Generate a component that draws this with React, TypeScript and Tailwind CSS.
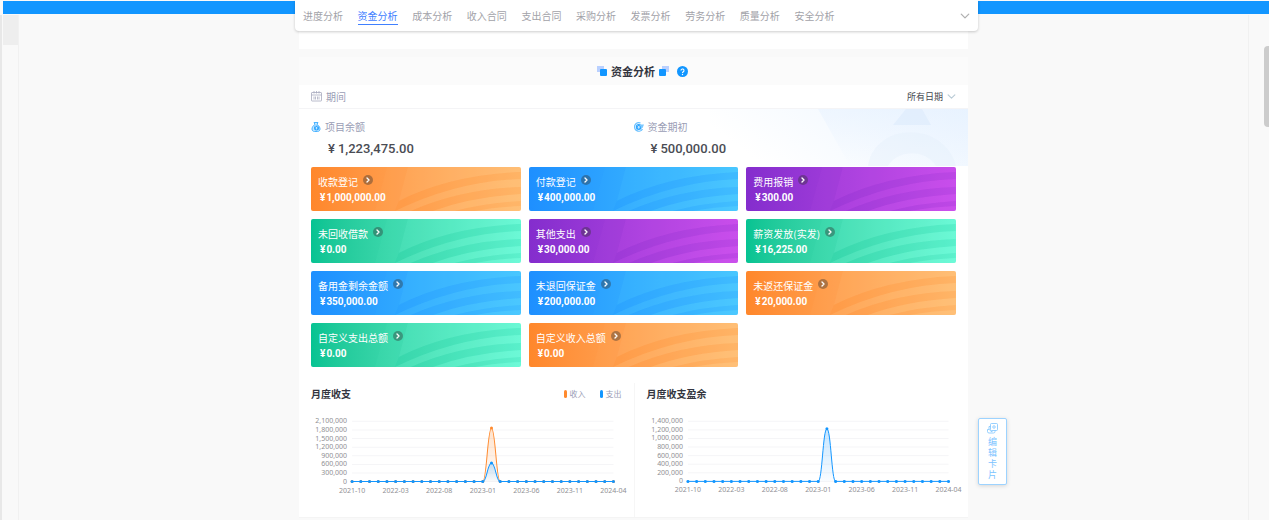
import { ChevronDown, ChevronRight } from 'lucide-react';

const tabs = [
  '进度分析',
  '资金分析',
  '成本分析',
  '收入合同',
  '支出合同',
  '采购分析',
  '发票分析',
  '劳务分析',
  '质量分析',
  '安全分析',
];

const tones = {
  orange: { bg: 'bg-linear-to-r from-[#ff872b] to-[#ffbe73]', shade: '#ff8a2e', light: '#ffc985' },
  blue: { bg: 'bg-linear-to-r from-[#1e8fff] to-[#48c4ff]', shade: '#1f97ff', light: '#56d2ff' },
  purple: { bg: 'bg-linear-to-r from-[#842dcd] to-[#c74cea]', shade: '#8f30d2', light: '#d65af5' },
  green: { bg: 'bg-linear-to-r from-[#05c392] to-[#69f8d5]', shade: '#18cc9f', light: '#7dffe0' },
};

type Tone = keyof typeof tones;

const cards: { title: string; amount: string; tone: Tone }[] = [
  { title: '收款登记', amount: '1,000,000.00', tone: 'orange' },
  { title: '付款登记', amount: '400,000.00', tone: 'blue' },
  { title: '费用报销', amount: '300.00', tone: 'purple' },
  { title: '未回收借款', amount: '0.00', tone: 'green' },
  { title: '其他支出', amount: '30,000.00', tone: 'purple' },
  { title: '薪资发放(实发)', amount: '16,225.00', tone: 'green' },
  { title: '备用金剩余金额', amount: '350,000.00', tone: 'blue' },
  { title: '未退回保证金', amount: '200,000.00', tone: 'blue' },
  { title: '未返还保证金', amount: '20,000.00', tone: 'orange' },
  { title: '自定义支出总额', amount: '0.00', tone: 'green' },
  { title: '自定义收入总额', amount: '0.00', tone: 'orange' },
];

const months = ['2021-10', '2022-03', '2022-08', '2023-01', '2023-06', '2023-11', '2024-04'];

function StatCard({ title, amount, tone }: { title: string; amount: string; tone: Tone }) {
  const t = tones[tone];
  return (
    <a href="#" className={`relative block h-11 overflow-hidden rounded-xs pl-[7px] pt-[7px] text-white ${t.bg}`}>
      <svg viewBox="0 0 210 44" preserveAspectRatio="none" className="absolute inset-0 h-full w-full" aria-hidden="true">
        <path d="M76 0H210V44H64Z" fill={t.light} opacity="0.05" />
        <path d="M97 0H210V5Q140 8 88 34Z" fill={t.light} opacity="0.12" />
        <path d="M88 34Q140 8 210 5V12Q146 14 84 44Z" fill={t.shade} opacity="0.2" />
        <path d="M84 44Q146 14 210 12V20Q150 22 100 44Z" fill={t.light} opacity="0.15" />
        <path d="M100 44Q150 22 210 20V27Q160 30 122 44Z" fill={t.shade} opacity="0.18" />
        <path d="M122 44Q160 30 210 27V34Q175 36 144 44Z" fill={t.light} opacity="0.22" />
        <path d="M144 44Q175 36 210 34V39Q185 40 164 44Z" fill={t.shade} opacity="0.15" />
        <path d="M164 44Q185 40 210 39V44Z" fill={t.light} opacity="0.25" />
      </svg>
      <div className="relative flex items-center gap-[5px] text-[10px] leading-4">
        <span>{title}</span>
        <span className="mb-1 flex h-[10px] w-[10px] items-center justify-center rounded-full bg-[#333333]/40">
          <ChevronRight size={8} strokeWidth={4} />
        </span>
      </div>
      <div className="relative flex items-center gap-px pl-[2px] font-[Roboto,'Noto_Sans_CJK_SC',sans-serif] text-[10px] font-bold leading-4">
        <span>¥</span>
        <span>{amount}</span>
      </div>
    </a>
  );
}

function Balance({ icon, label, amount }: { icon: React.ReactNode; label: string; amount: string }) {
  return (
    <div className="relative pt-[10px]">
      <div className="flex items-center gap-1 text-[10px] leading-4 text-[#9a9db5]">
        {icon}
        <span>{label}</span>
      </div>
      <div className="mt-[6px] flex gap-[3px] pl-[17px] font-[Roboto,'Noto_Sans_CJK_SC',sans-serif] text-[13px] font-medium leading-4 text-[#4a4c54]">
        <span>¥</span>
        <span>{amount}</span>
      </div>
    </div>
  );
}

function BagIcon() {
  return (
    <svg width="10" height="10" viewBox="0 0 20 20" fill="none" aria-hidden="true">
      <path d="M6 1h8l-2 4c4 2 6 6 6 9 0 3-2 5-5 5H7c-3 0-5-2-5-5 0-3 2-7 6-9L6 1Z" fill="#c3e6ff" stroke="#4db4ff" strokeWidth="2" />
      <circle cx="11" cy="12" r="5" fill="#2ea6ff" />
      <path d="M9 9l2 2 2-2M11 11v4M9 12h4" stroke="#fff" strokeWidth="1.2" />
    </svg>
  );
}

function CoinIcon() {
  return (
    <svg width="10" height="10" viewBox="0 0 20 20" fill="none" aria-hidden="true">
      <path d="M13 2a8.500 8.500 0 1 0 4 12" stroke="#6cc1ff" strokeWidth="2.500" />
      <circle cx="9.500" cy="10" r="6" fill="#2ea6ff" />
      <path d="M12 5h8l-3 7h-3Z" fill="#7cc8ff" />
      <path d="M7 7l2.500 2.500L12 7M9.500 9v5M7 10.500h5" stroke="#fff" strokeWidth="1.2" />
    </svg>
  );
}

type Series = { color: string; peak: number };

const X0 = 53;
const STEP = 8.7;
const BASE = 76.5;
const ROW = 8.6;
const PEAK = 16;

function LineChart({ id, ticks, series }: { id: string; ticks: string[]; series: Series[] }) {
  const left = X0 + STEP * (PEAK - 1);
  const mid = X0 + STEP * PEAK;
  const right = X0 + STEP * (PEAK + 1);
  const end = X0 + STEP * 30;
  return (
    <svg viewBox="0 0 334 112" className="block w-full font-['Noto_Sans',sans-serif]" role="img" aria-label={id}>
      {ticks.map((tick, i) => (
        <g key={tick}>
          <line x1={X0} x2={end} y1={BASE - ROW * i} y2={BASE - ROW * i} stroke="#f5f5f7" strokeWidth="1" />
          <text x="48" y={BASE - ROW * i + 2} textAnchor="end" fontSize="7" fill="#8f8f94">
            {tick}
          </text>
        </g>
      ))}
      {series.map((s, n) => {
        const top = BASE - s.peak * ROW * 7;
        const bump = `C${left + 4} ${BASE} ${mid - 4} ${top} ${mid} ${top}C${mid + 4} ${top} ${right - 4} ${BASE} ${right} ${BASE}`;
        return (
          <g key={s.color}>
            <defs>
              <linearGradient id={`${id}-${n}`} x1="0" x2="0" y1="0" y2="1">
                <stop offset="0" stopColor={s.color} stopOpacity="0.25" />
                <stop offset="1" stopColor={s.color} stopOpacity="0.02" />
              </linearGradient>
            </defs>
            <path d={`M${left} ${BASE}${bump}Z`} fill={`url(#${id}-${n})`} />
            <path d={`M${X0} ${BASE}H${left}${bump}H${end}`} fill="none" stroke={s.color} strokeWidth="1" />
            {Array.from({ length: 31 }, (_, i) => (
              <circle key={i} cx={X0 + STEP * i} cy={i === PEAK ? top : BASE} r="1.5" fill={s.color} />
            ))}
          </g>
        );
      })}
      {months.map((m, i) => (
        <text key={m} x={X0 + STEP * 5 * i} y={BASE + 11} textAnchor="middle" fontSize="7" fill="#8f8f94">
          {m}
        </text>
      ))}
    </svg>
  );
}

function TitleMark({ flip }: { flip?: boolean }) {
  return (
    <svg width="10" height="10" viewBox="0 0 10 10" className={flip ? '-scale-x-100' : ''} aria-hidden="true">
      <rect width="7" height="6" fill="#b9d0ff" />
      <rect x="3" y="3" width="7" height="7" rx="1" fill="#1296ff" />
    </svg>
  );
}

export default function App() {
  return (
    <div className="relative flex min-h-screen flex-col bg-[#f9f9f9] font-['Noto_Sans_CJK_SC',sans-serif]">
      <header className="relative z-10 pl-1">
        <div className="absolute left-[3px] right-0 top-px h-[13px] bg-[#1296ff]" />
        <nav className="relative mx-auto flex h-[31px] w-full max-w-[683px] items-center rounded-b bg-white px-2 shadow-[0_1px_3px_rgba(0,0,0,0.2)]">
          <ul className="grid w-[546px] grid-cols-10 text-[10px] leading-4">
            {tabs.map((tab) => (
              <li key={tab}>
                <a
                  href="#"
                  className={
                    tab === '资金分析'
                      ? 'inline-block border-b border-[#4080ff] pt-[2px] text-[#4080ff]'
                      : 'inline-block border-b border-transparent pt-[2px] text-[#a2a2a8]'
                  }
                >
                  {tab}
                </a>
              </li>
            ))}
          </ul>
          <button type="button" aria-label="展开" className="ml-auto text-[#b0b0b0]">
            <ChevronDown size={10} strokeWidth={2} viewBox="5 4 14 16" />
          </button>
        </nav>
      </header>

      <div className="flex flex-1">
        <aside className="-mt-4 w-[19px] border-l-2 border-r border-l-[#e8e8e8] border-r-[#f1f1f1] pl-px">
          <div className="h-[30px] bg-[#eeeeee]" />
        </aside>

        <main className="min-w-0 flex-1">
          <div className="relative mx-auto max-w-[669px]">
            <div className="h-[18px] bg-white" />

            <section className="mt-2 bg-white">
              <h2 className="flex h-7 items-center justify-center gap-1 bg-[#fbfbfb] text-[11px] font-bold text-[#333540]">
                <span className="ml-[18px]">
                  <TitleMark />
                </span>
                <span>资金分析</span>
                <TitleMark flip />
                <button
                  type="button"
                  aria-label="帮助"
                  className="ml-1 flex h-[11px] w-[11px] items-center justify-center rounded-full bg-[#1296ff] text-white"
                >
                  <svg width="11" height="11" viewBox="0 0 22 22" fill="none" aria-hidden="true">
                    <path d="M8 9a3 3 0 1 1 4.500 2.500c-1 .7-1.500 1.200-1.500 2.500" stroke="#fff" strokeWidth="2.200" />
                    <circle cx="11" cy="17" r="1.400" fill="#fff" />
                  </svg>
                </button>
              </h2>

              <div className="flex h-6 items-center border-b border-[#f4f4f6] px-3">
                <label htmlFor="period" className="flex items-center gap-1 text-[10px] leading-4 text-[#9a9db5]">
                  <svg width="11" height="11" viewBox="0 0 22 22" fill="none" stroke="#a3a6bb" strokeWidth="1.500" aria-hidden="true">
                    <rect x="1" y="3" width="20" height="17" rx="1" />
                    <path d="M1 8h20M6 0v5M11 0v5M16 0v5M6 11v6M9 11v6M13 11v6M16 11v6" />
                  </svg>
                  期间
                </label>
                <div className="ml-auto flex items-center gap-[3px]">
                  <select id="period" className="appearance-none bg-transparent text-[9px] leading-4 text-[#45474f] outline-none">
                    <option>所有日期</option>
                  </select>
                  <ChevronDown size={9} strokeWidth={2} viewBox="4 4 16 16" className="text-[#b9cbd6]" />
                </div>
              </div>

              <div className="relative grid h-[58px] grid-cols-2 px-3">
                <svg viewBox="0 0 258 57" className="absolute right-0 top-0 h-[57px] w-[258px]" aria-hidden="true">
                  <defs>
                    <linearGradient id="haze" x1="0" x2="1" y1="0.300" y2="0">
                      <stop offset="0" stopColor="#ecf5ff" stopOpacity="0" />
                      <stop offset="1" stopColor="#ecf5ff" />
                    </linearGradient>
                    <linearGradient id="fade" x1="0" x2="0" y1="0" y2="1">
                      <stop offset="0" stopColor="#e2efff" stopOpacity="0.400" />
                      <stop offset="1" stopColor="#e2efff" stopOpacity="0" />
                    </linearGradient>
                  </defs>
                  <rect width="258" height="57" fill="url(#haze)" />
                  <path d="M108 0H258V57H140Z" fill="url(#fade)" />
                  <path d="M196 0H212L221 16H183Z" fill="#dbeafc" opacity="0.550" />
                  <path d="M158 57C165 12 235 12 246 57H226C216 40 188 40 178 57Z" fill="#e3edfa" opacity="0.350" />
                </svg>
                <Balance icon={<BagIcon />} label="项目余额" amount="1,223,475.00" />
                <Balance icon={<CoinIcon />} label="资金期初" amount="500,000.00" />
              </div>

              <div className="grid grid-cols-3 gap-2 px-3">
                {cards.map((card) => (
                  <StatCard key={card.title} {...card} />
                ))}
              </div>

              <div className="mt-4 grid grid-cols-2 border-b border-[#f4f4f4]">
                <div>
                  <div className="flex h-[22px] items-center px-3 text-[#333540]">
                    <h3 className="text-[10px] font-bold leading-4">月度收支</h3>
                    <div className="ml-auto flex gap-[14px] text-[8px] leading-4 text-[#9a9db5]">
                      <span className="flex items-center gap-[3px]">
                        <i className="h-2 w-[3px] rounded-xs bg-[#ff8a2e]" />
                        收入
                      </span>
                      <span className="flex items-center gap-[3px]">
                        <i className="h-2 w-[3px] rounded-xs bg-[#1296ff]" />
                        支出
                      </span>
                    </div>
                  </div>
                  <LineChart
                    id="monthly"
                    ticks={['0', '300,000', '600,000', '900,000', '1,200,000', '1,500,000', '1,800,000', '2,100,000']}
                    series={[
                      { color: '#ff8a2e', peak: 0.89 },
                      { color: '#1296ff', peak: 0.31 },
                    ]}
                  />
                </div>
                <div className="border-l border-[#f6f6f6]">
                  <div className="flex h-[22px] items-center px-3 text-[#333540]">
                    <h3 className="text-[10px] font-bold leading-4">月度收支盈余</h3>
                  </div>
                  <LineChart
                    id="surplus"
                    ticks={['0', '200,000', '400,000', '600,000', '800,000', '1,000,000', '1,200,000', '1,400,000']}
                    series={[{ color: '#1296ff', peak: 0.874 }]}
                  />
                </div>
              </div>
            </section>

            <button
              type="button"
              className="absolute left-full top-[387px] ml-[10px] flex w-[29px] flex-col items-center rounded-xs border border-[#9dd3ff] bg-white py-1 text-[9px] leading-[11px] text-[#7cc4ff] shadow-[0_1px_4px_rgba(0,0,0,0.15)]"
            >
              <svg width="11" height="11" viewBox="0 0 22 22" fill="none" stroke="#7cc4ff" strokeWidth="1.600" className="mb-[2px]" aria-hidden="true">
                <rect x="7" y="1" width="14" height="14" rx="2" />
                <path d="M7 7H4v5M1 13v4a3 3 0 0 0 3 3h9a3 3 0 0 0 3-3v-2M1 13h4l3 4h3" />
                <circle cx="14" cy="8" r="2.500" />
              </svg>
              <span className="w-[9px] break-all">编辑卡片</span>
            </button>
          </div>
        </main>

        <div className="-mt-4 w-[21px] border-l border-[#f1f1f1]">
          <div className="ml-auto mt-[31px] h-[81px] w-[5px] rounded-l bg-[#cccccc]" />
        </div>
      </div>
    </div>
  );
}
